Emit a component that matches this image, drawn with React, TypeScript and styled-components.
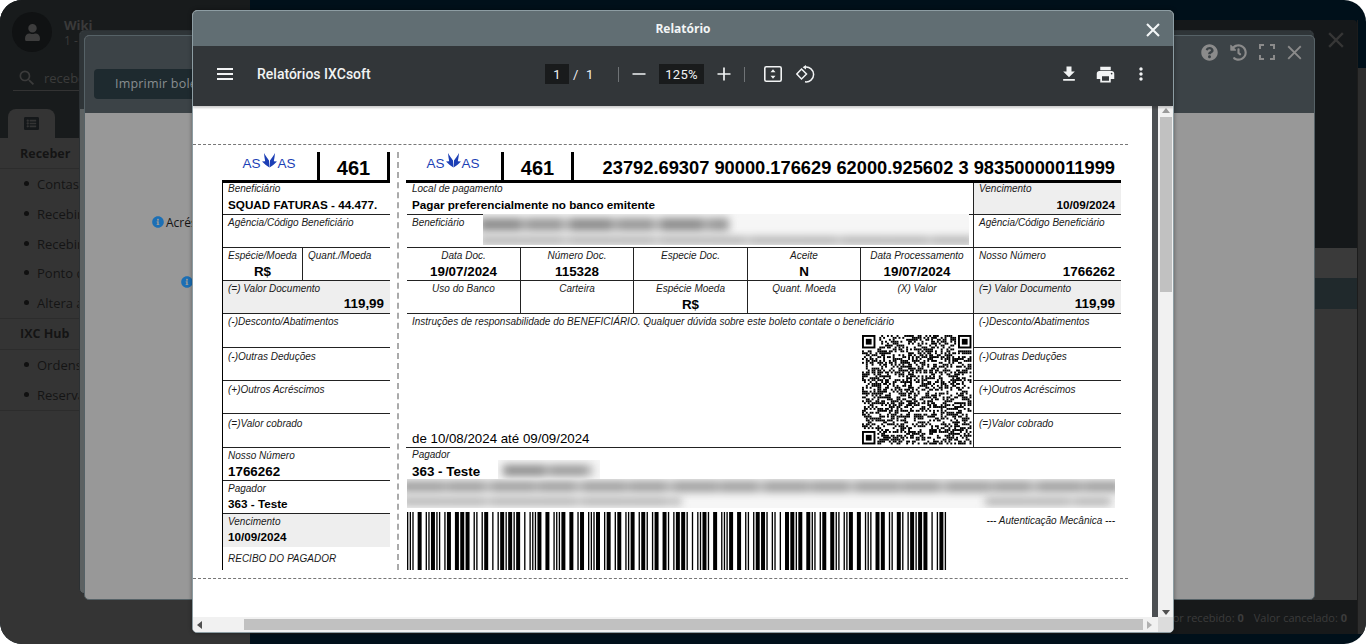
import React from "react";
import styled, { createGlobalStyle } from "styled-components";
import { FaHistory, FaListAlt, FaQuestionCircle, FaInfoCircle, FaUser } from "react-icons/fa";
import { MdFileDownload, MdPrint, MdMoreVert, MdSearch } from "react-icons/md";

const Global = createGlobalStyle`
  html, body { margin: 0; padding: 0; background: #fff; overflow: hidden; }
  * { box-sizing: border-box; }
`;

const Desktop = styled.div`
  position: relative; width: 1366px; height: 644px; border-radius: 22px; overflow: hidden;
  display: flex; background: #00101a; font-family: "Open Sans", sans-serif;
`;
const Sidebar = styled.aside`width: 250px; display: flex; flex-direction: column; background: #343434; color: #141414;`;
const SideTop = styled.div`height: 138px; background: #181b1c; padding: 12px 12px 0; display: flex; flex-direction: column;`;
const Profile = styled.div`display: flex; gap: 12px; height: 40px;`;
const Avatar = styled.div`width: 40px; height: 40px; border-radius: 50%; background: #101213; color: #3d3d3d; display: flex; align-items: center; justify-content: center;`;
const ProfileText = styled.div`color: #3a3a3a; font-size: 12px; line-height: 16px; padding-top: 5px; b { display: block; font-size: 13px; }`;
const SearchBar = styled.div`margin: 14px 0 0 1px; height: 25px; border-bottom: 1px solid #333; display: flex; align-items: center; gap: 7px; color: #3b3b3b; font-size: 13px; padding-left: 4px;`;
const Tab = styled.div`margin: 18px 0 0 -4px; width: 47px; height: 29px; background: #343434; border-radius: 8px 8px 0 0; display: flex; align-items: center; justify-content: center; color: #15181a;`;
const MenuHead = styled.div`height: 31px; padding-left: 20px; display: flex; align-items: center; font-size: 12.5px; font-weight: 700; border-bottom: 1px solid #2c2c2c;`;
const MenuList = styled.ul`margin: 0; padding: 0 0 0 37px; list-style: none; border-bottom: 1px solid #2c2c2c;`;
const MenuItem = styled.li`position: relative; height: 29.8px; font-size: 13px; line-height: 30px; white-space: nowrap;
  &::before { content: ""; position: absolute; left: -13px; top: 12px; width: 5px; height: 5px; border-radius: 50%; background: #101010; }`;

const Workspace = styled.div`flex: 1; display: flex; min-width: 0;`;
const BackWindow = styled.div`flex: 1; margin: 20px 0 10px; display: flex; flex-direction: column; border-right: 1px solid #1c1c1c;`;
const BackHeader = styled.div`height: 228px; background: #15181a; border-radius: 0 4px 0 0; display: flex; justify-content: flex-end; padding: 12px 13px 0 0;`;
const BackRow = styled.div<{ $bg: string; $h: number }>`height: ${p => p.$h}px; background: ${p => p.$bg};`;
const BackFill = styled.div`flex: 1; background: #363636;`;
const BackFooter = styled.div`height: 34px; background: #17191a; color: #3c3c3c; font-size: 11px; display: flex; justify-content: flex-end; align-items: center; gap: 10px; padding: 1px 10px 0 0; white-space: nowrap;`;
const Gutter = styled.div`width: 8px; margin: 68px 0 10px; background: #2d2d2d;`;

const Win = styled.div<{ $x: number; $y: number; $w: number; $h: number }>`
  position: absolute; left: ${p => p.$x}px; top: ${p => p.$y}px; width: ${p => p.$w}px; height: ${p => p.$h}px;
  border-radius: 5px; display: flex; flex-direction: column; overflow: hidden;
`;
const UnderWin = styled(Win)`background: #5c6162; border: 1px solid #2b3033;`;
const UnderHead = styled.div`height: 78px; background: #2f3538;`;
const MidWin = styled(Win)`background: #989898; border: 1px solid #566267;`;
const MidHeader = styled.div`height: 77px; flex: none; background: #3c4347; padding: 7px 12px 0 9px; display: flex; flex-direction: column;`;
const WinTools = styled.div`display: flex; justify-content: flex-end; align-items: center; gap: 12px; color: #8b8b8b; height: 18px;`;
const PrintButton = styled.div`margin-top: 8px; width: 130px; height: 30px; border-radius: 4px; background: #1e2a2f; color: #898e90; font-size: 12.5px; letter-spacing: 0.2px; line-height: 30px; padding-left: 21px;`;
const MidBody = styled.div`flex: 1; display: flex; flex-direction: column; color: #141414; font-size: 12px;`;
const InfoLine = styled.div<{ $pad: number; $top: number }>`display: flex; align-items: center; gap: 2px; padding-left: ${p => p.$pad}px; margin-top: ${p => p.$top}px; height: 16px; svg { color: #1b6fb5; }`;

const Report = styled(Win)`background: #fff; border: 1px solid #8d9da3; z-index: 2; box-shadow: 0 0 4px rgba(0,0,0,.4);`;
const ReportHead = styled.div`position: relative; height: 35px; flex: none; background: #616e73; color: #f2f5f6; font-size: 12px; font-weight: 700; display: flex; align-items: center; justify-content: center;`;
const ReportClose = styled.span`position: absolute; right: 13px; top: 12px; display: flex; color: #f3f6f7;`;
const PdfBar = styled.div`height: 60px; flex: none; background: #323639; color: #f1f3f4; display: flex; align-items: center; padding-bottom: 4px; font-family: Roboto, sans-serif; box-shadow: 0 2px 2px rgba(0,0,0,.2); position: relative; z-index: 1;`;
const PdfLeft = styled.div`width: 352px; flex: none; display: flex; align-items: center; padding-left: 24px; gap: 24px;`;
const Burger = styled.div`width: 16px; height: 12px; border-top: 2px solid #f1f3f4; border-bottom: 2px solid #f1f3f4; position: relative;
  &::after { content: ""; position: absolute; left: 0; right: 0; top: 3px; height: 2px; background: #f1f3f4; }`;
const PdfTitle = styled.div`font-size: 14px; font-weight: 500;`;
const PdfCenter = styled.div`display: flex; align-items: center; font-size: 13px;`;
const PageBox = styled.div<{ $w: number }>`width: ${p => p.$w}px; height: 20px; background: #191b1c; display: flex; align-items: center; justify-content: center; letter-spacing: .3px;`;
const Slash = styled.span`margin: 0 6px 0 4px; width: 7px;`;
const PageCount = styled.span`width: 8px;`;
const BarSep = styled.div<{ $l: number; $r: number }>`width: 1px; height: 15px; background: #6f7376; margin: 0 ${p => p.$r}px 0 ${p => p.$l}px;`;
const BarIcon = styled.span<{ $l?: number; $r?: number }>`display: flex; margin: 0 ${p => p.$r || 0}px 0 ${p => p.$l || 0}px;`;
const PdfRight = styled.div`margin-left: auto; display: flex; align-items: center; gap: 15.5px; padding-right: 22px;`;

const PdfArea = styled.div`flex: 1; min-height: 0; display: flex;`;
const PdfPage = styled.div`position: relative; width: 959px; background: #fff; padding-top: 38px; font-family: "Liberation Sans", Arial, sans-serif; color: #000; overflow: hidden;`;
const PdfEdge = styled.div`width: 6px; background: #4c4f52;`;
const VScroll = styled.div`width: 15px; background: #f1f1f1; display: flex; flex-direction: column; align-items: center; padding: 2px 0; justify-content: space-between;`;
const VThumb = styled.div`width: 12px; height: 175px; background: #c1c1c1; margin-top: 4px; margin-bottom: auto;`;
const HScroll = styled.div`height: 15px; flex: none; display: flex; background: #f1f1f1; align-items: center;`;
const HArrow = styled.div`width: 51px; flex: none; padding-left: 4px; display: flex;`;
const HThumb = styled.div`width: 899px; height: 11px; background: #c1c1c1;`;
const HEnd = styled.div`width: 15px; display: flex; padding-left: 4px;`;
const HCorner = styled.div`width: 15px; height: 15px; background: #dcdcdc; margin-left: auto;`;
const ArrowUp = styled.i`width: 0; height: 0; border: 4px solid transparent; border-top: 0; border-bottom: 5px solid #9a9a9a;`;
const ArrowDown = styled.i`width: 0; height: 0; border: 4px solid transparent; border-bottom: 0; border-top: 5px solid #505050;`;
const ArrowLeft = styled.i`width: 0; height: 0; border: 4px solid transparent; border-left: 0; border-right: 5px solid #505050;`;
const ArrowRight = styled.i`width: 0; height: 0; border: 4px solid transparent; border-right: 0; border-left: 5px solid #b0b0b0;`;

const CutLine = styled.div<{ $top?: number }>`width: 935px; border-top: 1px dashed #777; margin-top: ${p => p.$top || 0}px;`;
const Boleto = styled.div`display: flex; margin-top: 7px; padding-left: 29px; height: 418px;`;
const StubCol = styled.div`width: 168px; flex: none; display: flex; flex-direction: column;`;
const Perforation = styled.div`width: 0; margin: 0 7px; border-left: 2px dashed #aaa;`;
const MainCol = styled.div`width: 715px; flex: none; display: flex; flex-direction: column;`;

const Head = styled.div`height: 31px; flex: none; display: flex; border-bottom: 3px solid #000; align-items: stretch;`;
const LogoCell = styled.div<{ $w: number }>`width: ${p => p.$w}px; flex: none; display: flex; justify-content: center;`;
const BankCell = styled.div`width: 73px; flex: none; border-left: 3px solid #000; border-right: 3px solid #000; font-size: 20px; font-weight: 700; display: flex; align-items: center; justify-content: center; padding-top: 5px;`;
const LineCode = styled.div`flex: 1; text-align: right; padding: 4px 6px 0 0; font-size: 18.3px; font-weight: 700; line-height: 24px; white-space: nowrap;`;

const StubBody = styled.div`flex: 1; border-left: 1px solid #000; display: flex; flex-direction: column;`;
const Row = styled.div<{ $h: number; $shade?: boolean; $open?: boolean }>`
  height: ${p => p.$h}px; flex: none; display: flex;
  background: ${p => (p.$shade ? "#eeeeee" : "transparent")};
  border-bottom: ${p => (p.$open ? "0" : "1px solid #222")};
`;
const Field = styled.div<{ $w?: number; $center?: boolean; $rule?: boolean; $top?: number }>`
  ${p => (p.$w ? `width: ${p.$w}px; flex: none;` : "flex: 1;")}
  padding: ${p => p.$top ?? 2}px 5px 0; min-width: 0; display: flex; flex-direction: column;
  text-align: ${p => (p.$center ? "center" : "left")};
  border-right: ${p => (p.$rule ? "1px solid #222" : "0")};
`;
const Label = styled.div`font-size: 10px; font-style: italic; color: #1a1a1a; line-height: 11px; text-align: inherit; white-space: nowrap;`;
const RecLabel = styled(Label)`margin-top: auto; margin-bottom: 6px;`;
const Value = styled.div<{ $small?: boolean; $align?: string; $gap?: number }>`
  font-size: ${p => (p.$small ? 11.7 : 13.4)}px; font-weight: 700; line-height: 15px;
  margin-top: ${p => p.$gap ?? (p.$small ? 2 : 3)}px; white-space: nowrap; text-align: ${p => p.$align || "inherit"};
  margin-right: ${p => (p.$align === "right" ? 1 : 0)}px;
`;
const Body = styled.div`flex: none; display: flex; padding-left: 1px;`;
const Bills = styled.div`width: 566px; flex: none; display: flex; flex-direction: column;`;
const Side = styled.div`flex: 1; border-left: 1px solid #222; display: flex; flex-direction: column;`;
const Notes = styled.div`position: relative; height: 133px; padding: 2px 5px 0; display: flex; flex-direction: column;`;
const Period = styled.div`margin-top: auto; font-size: 13.3px; line-height: 15px; margin-bottom: 1px;`;
const QrSlot = styled.div`position: absolute; right: 1px; top: 21px; display: flex;`;
const Payer = styled.div`height: 65px; flex: none; border-top: 1px solid #222; padding: 1px 5px 0 6px;`;
const Code = styled.div`display: flex; justify-content: space-between; padding: 0 6px 0 1px;`;
const Auth = styled.div`font-size: 10px; font-style: italic; color: #1a1a1a; line-height: 12px; padding-top: 3px;`;

const Blur = styled.div<{ $x: number; $y: number; $w: number; $h: number }>`
  position: absolute; left: ${p => p.$x}px; top: ${p => p.$y}px; width: ${p => p.$w}px; height: ${p => p.$h}px;
  background: #f6f6f6; overflow: hidden;
`;
const Smudge = styled.div<{ $x: number; $y: number; $w: number; $h?: number; $tone?: string }>`
  position: absolute; left: ${p => p.$x}px; top: ${p => p.$y}px; width: ${p => p.$w}px; height: ${p => p.$h || 9}px;
  filter: blur(4px);
  background: repeating-linear-gradient(90deg, ${p => p.$tone || "#8a8a8a"} 0 41px, #a8a8a8 41px 49px, ${p => p.$tone || "#969696"} 49px 83px, #b8b8b8 83px 91px);
`;

const Logo = () => (
  <svg width="56" height="19" viewBox="0 0 56 19">
    <g fill="#1c3fb5" fontFamily="'Liberation Sans', Arial, sans-serif" fontSize="13">
      <text x="0.5" y="15.5" textLength="18" lengthAdjust="spacingAndGlyphs">AS</text>
      <text x="35.5" y="15.5" textLength="18" lengthAdjust="spacingAndGlyphs">AS</text>
      <path d="M22 1 C23.5 4 25.5 6 27 8.5 L27.4 15.5 C25 14 22.5 12 20 9.5 L23.2 9.3 C22.6 6.5 22.2 3.5 22 1 Z" />
      <path d="M33 1 C31.5 4 29.5 6 28 8.5 L27.6 15.5 C30 14 32.5 12 35 9.5 L31.8 9.3 C32.4 6.5 32.8 3.5 33 1 Z" />
    </g>
  </svg>
);

const itfPatterns = ["nnwwn", "wnnnw", "nwnnw", "wwnnn", "nnwnw", "wnwnn", "nwwnn", "nnnww", "wnnwn", "nwnwn"];
const DIGITS = "23793983500000119992693090000176626200092560";
const Barcode = () => {
  const unit = 1.331;
  const bars: React.ReactElement[] = [];
  let x = 0;
  const put = (wide: boolean, black: boolean) => {
    const w = (wide ? 3 : 1) * unit;
    if (black) bars.push(<rect key={bars.length} x={x} y={0} width={w} height={58} fill="#000" />);
    x += w;
  };
  [false, false, false, false].forEach((w, i) => put(w, i % 2 === 0));
  for (let i = 0; i < DIGITS.length; i += 2) {
    const a = itfPatterns[+DIGITS[i]];
    const b = itfPatterns[+DIGITS[i + 1]];
    for (let k = 0; k < 5; k++) {
      put(a[k] === "w", true);
      put(b[k] === "w", false);
    }
  }
  put(true, true); put(false, false); put(false, true);
  return <svg width="540" height="58" viewBox="0 0 540 58" style={{ display: "block" }}>{bars}</svg>;
};

const QrCode = () => {
  const n = 57;
  const m = 1.92;
  const cells: React.ReactElement[] = [];
  let seed = 20240719;
  const next = () => { seed = (seed * 1664525 + 1013904223) >>> 0; return (seed >>> 16) & 1; };
  const inFinder = (x: number, y: number) => (x < 8 && y < 8) || (x >= n - 8 && y < 8) || (x < 8 && y >= n - 8);
  for (let y = 0; y < n; y++) for (let x = 0; x < n; x++) {
    const on = next();
    if (!inFinder(x, y) && on) cells.push(<rect key={`${x}-${y}`} x={x * m} y={y * m} width={m} height={m} fill="#000" />);
  }
  const finder = (x: number, y: number) => (
    <g key={`f${x}${y}`}>
      <rect x={x * m} y={y * m} width={7 * m} height={7 * m} fill="#000" />
      <rect x={(x + 1) * m} y={(y + 1) * m} width={5 * m} height={5 * m} fill="#fff" />
      <rect x={(x + 2) * m} y={(y + 2) * m} width={3 * m} height={3 * m} fill="#000" />
    </g>
  );
  return <svg width="110" height="110" viewBox="0 0 110 110">{cells}{finder(0, 0)}{finder(n - 7, 0)}{finder(0, n - 7)}</svg>;
};

const Cross = ({ size, color, w = 2 }: { size: number; color: string; w?: number }) => (
  <svg width={size} height={size} viewBox="0 0 16 16"><path d="M2 2 L14 14 M14 2 L2 14" stroke={color} strokeWidth={w} strokeLinecap="square" fill="none" /></svg>
);
const Corners = () => (
  <svg width="16" height="16" viewBox="0 0 16 16"><path d="M1 5V1H5 M11 1H15V5 M15 11V15H11 M5 15H1V11" stroke="#8b8b8b" strokeWidth="2" fill="none" /></svg>
);
const FitPage = () => (
  <svg width="18" height="16" viewBox="0 0 18 16">
    <rect x="0.8" y="0.8" width="16.4" height="14.4" rx="1.5" stroke="#f1f3f4" strokeWidth="1.6" fill="none" />
    <path d="M9 3.2 L11.5 6.2 H6.5 Z M9 12.8 L11.5 9.8 H6.5 Z" fill="#f1f3f4" />
  </svg>
);
const Rotate = () => (
  <svg width="19" height="18" viewBox="0 0 19 18">
    <path d="M5.5 4 L10.5 9 L5.5 14 L0.8 9 Z" stroke="#f1f3f4" strokeWidth="1.5" fill="none" />
    <path d="M9 2.2 A7.4 7.4 0 1 1 9 16.8" stroke="#f1f3f4" strokeWidth="1.5" fill="none" />
    <path d="M10 0 V4.6 L6.6 2.3 Z" fill="#f1f3f4" />
  </svg>
);
const PlusMinus = ({ plus }: { plus?: boolean }) => (
  <svg width="14" height="14" viewBox="0 0 14 14"><path d={plus ? "M0.5 7 H13.5 M7 0.5 V13.5" : "M0.5 7 H13.5"} stroke="#f1f3f4" strokeWidth="1.7" fill="none" /></svg>
);

const Stub = () => (
  <StubCol>
    <Head>
      <LogoCell $w={95}><Logo /></LogoCell>
      <BankCell>461</BankCell>
    </Head>
    <StubBody>
      <Row $h={32}><Field $top={0}><Label>Beneficiário</Label><Value $small $gap={3}>SQUAD FATURAS - 44.477.</Value></Field></Row>
      <Row $h={33}><Field><Label>Agência/Código Beneficiário</Label></Field></Row>
      <Row $h={33}>
        <Field $w={80} $rule><Label>Espécie/Moeda</Label><Value $align="center">R$</Value></Field>
        <Field><Label>Quant./Moeda</Label></Field>
      </Row>
      <Row $h={33} $shade><Field><Label>(=) Valor Documento</Label><Value $align="right" $gap={2}>119,99</Value></Field></Row>
      <Row $h={34}><Field><Label>(-)Desconto/Abatimentos</Label></Field></Row>
      <Row $h={33}><Field $top={3}><Label>(-)Outras Deduções</Label></Field></Row>
      <Row $h={33}><Field $top={3}><Label>(+)Outros Acréscimos</Label></Field></Row>
      <Row $h={34}><Field $top={4}><Label>(=)Valor cobrado</Label></Field></Row>
      <Row $h={33}><Field><Label>Nosso Número</Label><Value>1766262</Value></Field></Row>
      <Row $h={33}><Field><Label>Pagador</Label><Value $small>363 - Teste</Value></Field></Row>
      <Row $h={33} $shade $open><Field><Label>Vencimento</Label><Value $small>10/09/2024</Value></Field></Row>
      <Row $h={23} $open><Field><RecLabel>RECIBO DO PAGADOR</RecLabel></Field></Row>
    </StubBody>
  </StubCol>
);

const Main = () => (
  <MainCol>
    <Head>
      <LogoCell $w={95}><Logo /></LogoCell>
      <BankCell>461</BankCell>
      <LineCode>23792.69307 90000.176629 62000.925602 3 98350000011999</LineCode>
    </Head>
    <Body>
      <Bills>
        <Row $h={32}><Field $top={0}><Label>Local de pagamento</Label><Value $small $gap={3}>Pagar preferencialmente no banco emitente</Value></Field></Row>
        <Row $h={33}><Field><Label>Beneficiário</Label></Field></Row>
        <Row $h={33}>
          <Field $w={114} $center $rule><Label>Data Doc.</Label><Value>19/07/2024</Value></Field>
          <Field $w={113} $center $rule><Label>Número Doc.</Label><Value>115328</Value></Field>
          <Field $w={114} $center $rule><Label>Especie Doc.</Label></Field>
          <Field $w={113} $center $rule><Label>Aceite</Label><Value>N</Value></Field>
          <Field $center><Label>Data Processamento</Label><Value>19/07/2024</Value></Field>
        </Row>
        <Row $h={33}>
          <Field $w={114} $center $rule><Label>Uso do Banco</Label></Field>
          <Field $w={113} $center $rule><Label>Carteira</Label></Field>
          <Field $w={114} $center $rule><Label>Espécie Moeda</Label><Value>R$</Value></Field>
          <Field $w={113} $center $rule><Label>Quant. Moeda</Label></Field>
          <Field $center><Label>(X) Valor</Label></Field>
        </Row>
        <Notes>
          <Label>Instruções de responsabilidade do BENEFICIÁRIO. Qualquer dúvida sobre este boleto contate o beneficiário</Label>
          <QrSlot><QrCode /></QrSlot>
          <Period>de 10/08/2024 até 09/09/2024</Period>
        </Notes>
      </Bills>
      <Side>
        <Row $h={32} $shade><Field $top={0}><Label>Vencimento</Label><Value $small $align="right" $gap={3}>10/09/2024</Value></Field></Row>
        <Row $h={33}><Field><Label>Agência/Código Beneficiário</Label></Field></Row>
        <Row $h={33}><Field><Label>Nosso Número</Label><Value $align="right">1766262</Value></Field></Row>
        <Row $h={33} $shade><Field><Label>(=) Valor Documento</Label><Value $align="right" $gap={2}>119,99</Value></Field></Row>
        <Row $h={34}><Field><Label>(-)Desconto/Abatimentos</Label></Field></Row>
        <Row $h={33}><Field $top={3}><Label>(-)Outras Deduções</Label></Field></Row>
        <Row $h={33}><Field $top={3}><Label>(+)Outros Acréscimos</Label></Field></Row>
        <Row $h={33} $open><Field $top={4}><Label>(=)Valor cobrado</Label></Field></Row>
      </Side>
    </Body>
    <Payer>
      <Label>Pagador</Label>
      <Value $gap={4}>363 - Teste</Value>
    </Payer>
    <Code>
      <Barcode />
      <Auth>--- Autenticação Mecânica ---</Auth>
    </Code>
  </MainCol>
);

export default function App() {
  return (
    <>
      <Global />
      <Desktop>
        <Sidebar>
          <SideTop>
            <Profile>
              <Avatar><FaUser size={17} /></Avatar>
              <ProfileText><b>Wiki</b>1 -</ProfileText>
            </Profile>
            <SearchBar><MdSearch size={20} /> receber</SearchBar>
            <Tab><FaListAlt size={15} /></Tab>
          </SideTop>
          <MenuHead>Receber</MenuHead>
          <MenuList>
            <MenuItem>Contas a receber</MenuItem>
            <MenuItem>Recebimentos</MenuItem>
            <MenuItem>Recebimentos</MenuItem>
            <MenuItem>Ponto de venda</MenuItem>
            <MenuItem>Altera a fatura</MenuItem>
          </MenuList>
          <MenuHead>IXC Hub</MenuHead>
          <MenuList>
            <MenuItem>Ordens</MenuItem>
            <MenuItem>Reservas</MenuItem>
          </MenuList>
        </Sidebar>
        <Workspace>
          <BackWindow>
            <BackHeader><Cross size={16} color="#363636" w={2.4} /></BackHeader>
            <BackRow $h={30} $bg="#3a3a3a" />
            <BackRow $h={31} $bg="#20292c" />
            <BackFill />
            <BackFooter><span>Valor recebido: <b>0</b></span><span>Valor cancelado: <b>0</b></span></BackFooter>
          </BackWindow>
          <Gutter />
        </Workspace>

        <UnderWin $x={79} $y={30} $w={1235} $h={564}><UnderHead /></UnderWin>

        <MidWin $x={84} $y={35} $w={1231} $h={565}>
          <MidHeader>
            <WinTools>
              <FaQuestionCircle size={17} />
              <FaHistory size={17} />
              <Corners />
              <Cross size={15} color="#8b8b8b" />
            </WinTools>
            <PrintButton>Imprimir boleto</PrintButton>
          </MidHeader>
          <MidBody>
            <InfoLine $pad={67} $top={101}><FaInfoCircle size={12} /> Acréscimo</InfoLine>
            <InfoLine $pad={96} $top={44}><FaInfoCircle size={12} /> Multa</InfoLine>
          </MidBody>
        </MidWin>

        <Report $x={192} $y={10} $w={982} $h={623}>
          <ReportHead>
            Relatório
            <ReportClose><Cross size={14} color="#f3f6f7" w={2.4} /></ReportClose>
          </ReportHead>
          <PdfBar>
            <PdfLeft><Burger /><PdfTitle>Relatórios IXCsoft</PdfTitle></PdfLeft>
            <PdfCenter>
              <PageBox $w={24}>1</PageBox>
              <Slash>/</Slash>
              <PageCount>1</PageCount>
              <BarSep $l={24} $r={13} />
              <PlusMinus />
              <BarIcon $l={13} $r={13}><PageBox $w={45}>125%</PageBox></BarIcon>
              <PlusMinus plus />
              <BarSep $l={13} $r={19} />
              <FitPage />
              <BarIcon $l={14}><Rotate /></BarIcon>
            </PdfCenter>
            <PdfRight>
              <MdFileDownload size={20} />
              <MdPrint size={21} />
              <MdMoreVert size={20} />
            </PdfRight>
          </PdfBar>
          <PdfArea>
            <PdfPage>
              <CutLine />
              <Boleto>
                <Stub />
                <Perforation />
                <Main />
              </Boleto>
              <CutLine $top={8} />
              <Blur $x={290} $y={108} $w={486} $h={31}>
                <Smudge $x={-4} $y={4} $w={250} $h={13} />
                <Smudge $x={-4} $y={23} $w={495} $h={7} $tone="#a6a6a6" />
              </Blur>
              <Blur $x={305} $y={354} $w={102} $h={20}>
                <Smudge $x={5} $y={5} $w={90} $h={11} />
              </Blur>
              <Blur $x={214} $y={373} $w={708} $h={29}>
                <Smudge $x={-6} $y={2} $w={720} $h={11} $tone="#9c9c9c" />
                <Smudge $x={-6} $y={19} $w={280} $h={7} $tone="#a6a6a6" />
                <Smudge $x={578} $y={19} $w={126} $h={7} $tone="#a6a6a6" />
              </Blur>
            </PdfPage>
            <PdfEdge />
            <VScroll>
              <ArrowUp />
              <VThumb />
              <ArrowDown />
            </VScroll>
          </PdfArea>
          <HScroll>
            <HArrow><ArrowLeft /></HArrow>
            <HThumb />
            <HEnd><ArrowRight /></HEnd>
            <HCorner />
          </HScroll>
        </Report>
      </Desktop>
    </>
  );
}
